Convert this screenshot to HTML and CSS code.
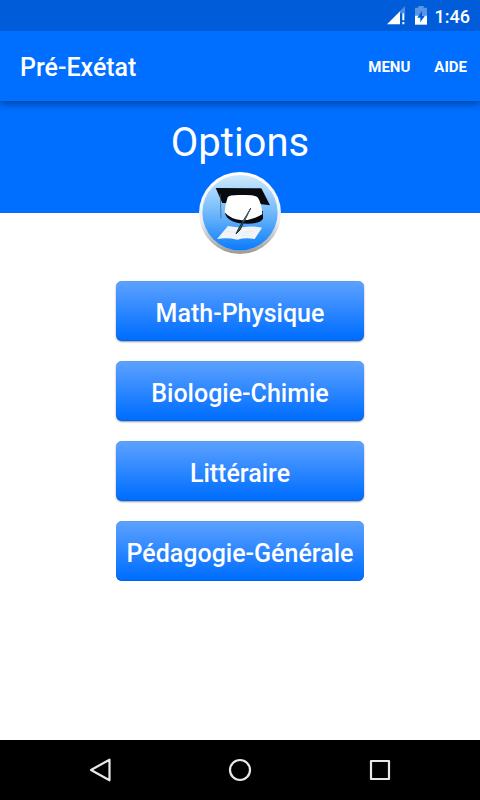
FILE: index.html
```html
<!DOCTYPE html>
<html lang="fr">
<head>
    <meta charset="UTF-8">
    <title>Pré-Exétat</title>
    <link rel="stylesheet" href="styles.css">
</head>

<body>
<div class="statusbar">
    <svg class="signal" viewBox="0 0 54 57">
        <path d="M54 0L39 15V22H54Z" fill="#fff" fill-opacity=".3"/>
        <path d="M0 55L39 16V55Z" fill="#fff"/>
        <path d="M46 22H52V43H46ZM46 48H52V55H46Z" fill="#fff"/>
    </svg>
    <svg class="battery" viewBox="0 0 36 57">
        <path d="M10 0H26V5H36V29H0V5H10Z" fill="#fff" fill-opacity=".35"/>
        <path d="M0 29H36V56H0Z" fill="#fff"/>
        <path d="M21 14L7 35H16V49L30 29H21Z" fill="#005cd9"/>
    </svg>
    <span class="clock">1:46</span>
</div>

<header class="appbar">
    <h1>Pré-Exétat</h1>
    <nav>
        <a>MENU</a>
        <a>AIDE</a>
    </nav>
</header>

<div class="banner">
    <h2>Options</h2>
    <svg class="logo" viewBox="0 0 300 300">
        <defs>
            <linearGradient id="sky" x1="0" y1="0" x2="0" y2="1">
                <stop offset="0" stop-color="#cfe9fc"/>
                <stop offset=".5" stop-color="#70b9fb"/>
                <stop offset="1" stop-color="#0a7bfa"/>
            </linearGradient>
            <linearGradient id="rim" x1="0" y1="0" x2="0" y2="1">
                <stop offset="0" stop-color="#fff"/>
                <stop offset=".6" stop-color="#eceef2"/>
                <stop offset="1" stop-color="#999"/>
            </linearGradient>
        </defs>
        <circle cx="150" cy="144" r="123" fill="url(#rim)"/>
        <circle cx="150" cy="143" r="113" fill="url(#sky)"/>
        <!-- cap -->
        <path d="M77 69L214 70L240 121L203 116L97 114Z" fill="#070b10"/>
        <path d="M91 86L93 160" stroke="#34506b" stroke-width="2"/>
        <path d="M105 140Q106 166 148 175Q212 180 219 160V138Z" fill="#070b10"/>
        <path d="M113 97Q118 89 153 90Q194 88 204 98Q216 118 217 148Q187 166 155 166Q120 162 104 142Q106 116 113 97Z" fill="#fff"/>
        <!-- paper and pen -->
        <path d="M114 183Q140 188 158 187Q186 181 216 188L194 222Q166 217 142 224Q112 217 81 222Z" fill="#f2f5f8"/>
        <path d="M157 188L139 223M109 199L142 203M161 202L190 199M158 212L181 209" stroke="#dde3e8" stroke-width="1.5" fill="none"/>
        <path d="M182 130L146 190L138 207L150 195Z" fill="#2b5a60" stroke="#173238" stroke-width="3"/>
        <path d="M181 133L160 168" stroke="#83a9a8" stroke-width="1.5"/>
    </svg>
</div>

<main class="options">
    <button>Math-Physique</button>
    <button>Biologie-Chimie</button>
    <button>Littéraire</button>
    <button>Pédagogie-Générale</button>
</main>

<div class="navbar">
    <svg viewBox="0 0 24 24"><path d="M21.5 1.7V22.3L3 12Z"/></svg>
    <svg viewBox="0 0 24 24"><circle cx="12" cy="12" r="10"/></svg>
    <svg viewBox="0 0 24 24"><path d="M3 3H21V21H3Z"/></svg>
</div>
</body>
</html>
```

FILE: styles.css
```css
body {
    margin: 0;
    height: 800px;
    display: flex;
    flex-direction: column;
    background: #fff;
    color: #fff;
    font-family: Roboto, sans-serif;
    overflow: hidden;
}
.statusbar {
    height: 31px;
    display: flex;
    justify-content: flex-end;
    align-items: center;
    padding-right: 10px;
    background: #005cd9;
}
.signal {
    width: 18px;
    height: 19px;
    margin-right: 10px;
}
.battery {
    width: 12px;
    height: 19px;
    margin-right: 8px;
}
.clock {
    font-size: 18px;
    font-weight: 500;
    line-height: 31px;
    padding-top: 2px;
}
.appbar {
    position: relative;
    height: 70px;
    display: flex;
    justify-content: space-between;
    align-items: center;
    padding: 0 13px 0 20px;
    background: #006eff;
    box-shadow: 0 3px 7px rgba(0, 0, 0, .38);
    clip-path: inset(0 0 -12px 0);
}
.appbar h1 {
    margin: 3px 0 0;
    font-size: 25px;
    font-weight: 500;
}
.appbar nav {
    display: flex;
    gap: 24px;
    padding-top: 2px;
    font-size: 15px;
    font-weight: 700;
}
.banner {
    height: 112px;
    display: flex;
    flex-direction: column;
    align-items: center;
    background: #006eff;
}
.banner h2 {
    margin: 18px 0 0;
    font-size: 40px;
    font-weight: 400;
    line-height: 48px;
}
.logo {
    flex: none;
    width: 100px;
    height: 100px;
    margin-top: -2px;
}
.options {
    flex: 1;
    display: flex;
    flex-direction: column;
    align-items: center;
    gap: 20px;
    padding-top: 68px;
}
.options button {
    width: 248px;
    height: 60px;
    padding: 4px 0 0;
    border: 0;
    border-radius: 6px;
    background: linear-gradient(#5ea2ff, #006eff 95%);
    box-shadow: 0 1px 2px rgba(0, 0, 0, .4), inset 0 1px #5b9bee, inset 0 -1px #0062e5;
    color: #fff;
    font: 500 25px Roboto, sans-serif;
    white-space: nowrap;
}
.options button:last-child {
    box-shadow: inset 0 1px #5b9bee, inset 0 -1px #0062e5;
}
.navbar {
    height: 60px;
    display: flex;
    justify-content: center;
    align-items: center;
    gap: 116px;
    background: #000;
}
.navbar svg {
    width: 24px;
    height: 24px;
    fill: none;
    stroke: #e8e8e8;
    stroke-width: 2.2;
    stroke-linejoin: round;
}
```
